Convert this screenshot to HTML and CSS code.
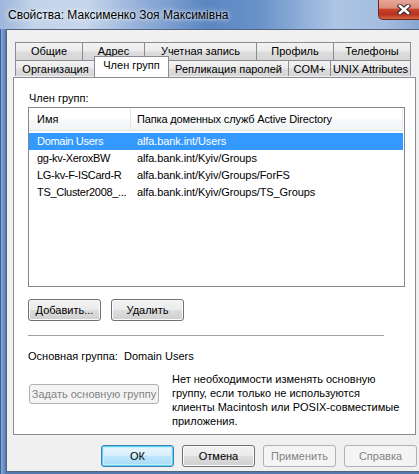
FILE: index.html
```html
<!DOCTYPE html>
<html>
<head>
<meta charset="utf-8">
<title>Свойства</title>
<link rel="stylesheet" href="styles.css">
</head>
<body>
<div class="window">
  <div class="titlebar">
    <span class="title">Свойства: Максименко Зоя Максимівна</span>
    <div class="close">
      <svg width="14" height="11" viewBox="0 0 14 11">
        <path d="M3 2 L11 9 M11 2 L3 9" stroke="#3b2a2a" stroke-width="4.6" stroke-linecap="square" fill="none"/>
        <path d="M3 2 L11 9 M11 2 L3 9" stroke="#ffffff" stroke-width="2.6" stroke-linecap="square" fill="none"/>
      </svg>
    </div>
  </div>
  <div class="frame">
    <div class="client">
      <div class="tabs">
        <div class="tabrow back">
          <div class="tab t-gen">Общие</div>
          <div class="tab t-addr">Адрес</div>
          <div class="tab t-acc">Учетная запись</div>
          <div class="tab t-prof">Профиль</div>
          <div class="tab t-tel last">Телефоны</div>
        </div>
        <div class="tabrow front">
          <div class="tab t-org">Организация</div>
          <div class="tab t-mem selected">Член групп</div>
          <div class="tab t-rep">Репликация паролей</div>
          <div class="tab t-com">COM+</div>
          <div class="tab t-unix last">UNIX Attributes</div>
        </div>
      </div>
      <div class="panel">
        <div class="label">Член групп:</div>
        <div class="listbox">
          <div class="lhead">
            <div class="hc1">Имя</div>
            <div class="hc2">Папка доменных служб Active Directory</div>
          </div>
          <div class="rows">
            <div class="row sel"><span class="c1">Domain Users</span><span class="c2">alfa.bank.int/Users</span></div>
            <div class="row"><span class="c1">gg-kv-XeroxBW</span><span class="c2">alfa.bank.int/Kyiv/Groups</span></div>
            <div class="row"><span class="c1">LG-kv-F-ISCard-R</span><span class="c2">alfa.bank.int/Kyiv/Groups/ForFS</span></div>
            <div class="row"><span class="c1">TS_Cluster2008_...</span><span class="c2">alfa.bank.int/Kyiv/Groups/TS_Groups</span></div>
          </div>
        </div>
        <div class="btnrow">
          <button class="btn">Добавить...</button>
          <button class="btn">Удалить</button>
        </div>
        <div class="sep"></div>
        <div class="primary"><span class="pg-label">Основная группа:</span><span>Domain Users</span></div>
        <div class="setrow">
          <button class="btn setbtn" disabled>Задать основную группу</button>
          <p class="note">Нет необходимости изменять основную<br>группу, если только не используются<br>клиенты Macintosh или POSIX-совместимые<br>приложения.</p>
        </div>
      </div>
      <div class="footer">
        <button class="btn default">ОК</button>
        <button class="btn">Отмена</button>
        <button class="btn" disabled>Применить</button>
        <button class="btn" disabled>Справка</button>
      </div>
    </div>
  </div>
</div>
</body>
</html>
```
FILE: styles.css
```css
html, body {
  margin: 0;
  padding: 0;
}
body {
  width: 419px;
  height: 474px;
  overflow: hidden;
  background: #5a7fb6;
  font-family: "Liberation Sans", Arial, sans-serif;
  font-size: 11px;
  color: #000;
}
.window {
  width: 430px;
  height: 480px;
  display: flex;
  flex-direction: column;
  background: #5a7fb6;
}
.titlebar {
  height: 29px;
  display: flex;
  align-items: flex-start;
  background: linear-gradient(90deg, #9db6da 0%, #c3d3ea 8%, #c6d6eb 20%, #8eabd6 34%, #5b86c2 48%, #6891c9 60%, #aec5e4 78%, #a3bcdf 90%, #7f9fd0 100%);
}
.title {
  flex: 1;
  padding-left: 8px;
  line-height: 30px;
  font-size: 12px;
  color: #000;
  text-shadow: 0 0 6px rgba(255,255,255,0.9), 0 0 3px rgba(255,255,255,0.7);
  white-space: nowrap;
}
.close {
  width: 49px;
  height: 20px;
  margin-right: 3px;
  box-sizing: border-box;
  border: 1px solid #6e2b22;
  border-top: none;
  border-radius: 0 0 5px 5px;
  background: linear-gradient(#e8a797 0%, #d98c7c 42%, #c7432e 50%, #b8321d 75%, #d4653f 100%);
  display: flex;
  align-items: center;
  justify-content: center;
  padding-left: 3px;
}
.frame {
  flex: 1;
  padding-left: 6px;
  background: linear-gradient(90deg, #3c5f98 0px, #3c5f98 1px, #89a9d7 1px, #7196cc 3px, #5378b0 6px);
}
.client {
  width: 417px;
  height: 443px;
  box-sizing: border-box;
  border: 1px solid #52647e;
  background: #f0f0f0;
  padding: 12px 0 0 6px;
  display: flex;
  flex-direction: column;
}
.tabs {
  margin-left: 2px;
  width: 396px;
}
.tabrow {
  display: flex;
}
.tab {
  box-sizing: border-box;
  border-left: 1px solid #898c95;
  border-top: 1px solid #898c95;
  background: linear-gradient(#f3f3f3 0%, #ebebeb 45%, #dcdcdc 55%, #d6d6d6 100%);
  text-align: center;
  white-space: nowrap;
}
.tab.last {
  border-right: 1px solid #898c95;
}
.back .tab {
  height: 18px;
  line-height: 17px;
}
.front .tab {
  height: 16px;
  line-height: 16px;
}
.t-gen { width: 67px; }
.t-addr { width: 62px; }
.t-acc { width: 112px; }
.t-prof { width: 77px; }
.t-tel { width: 78px; }
.t-org { width: 80px; }
.t-mem { width: 73px; }
.t-rep { width: 120px; }
.t-com { width: 42px; }
.t-unix { width: 81px; }
.front .tab.selected {
  position: relative;
  z-index: 2;
  width: 75px;
  height: 21px;
  margin: -4px -1px 0 -1px;
  border-right: 1px solid #898c95;
  background: #fff;
  line-height: 17px;
}
.panel {
  position: relative;
  z-index: 1;
  box-sizing: border-box;
  width: 403px;
  height: 358px;
  border: 1px solid #898c95;
  background: #fff;
  padding: 14px 0 0 14px;
}
.label {
  line-height: 13px;
  height: 13px;
  margin-left: 1px;
}
.listbox {
  margin-top: 2px;
  box-sizing: border-box;
  width: 377px;
  height: 180px;
  border: 1px solid #828790;
  background: #fff;
}
.lhead {
  display: flex;
  height: 23px;
  box-sizing: border-box;
  border-bottom: 1px solid #e3e5e8;
  background: linear-gradient(#ffffff 0%, #ffffff 45%, #f7f8f9 55%, #f3f4f6 100%);
  margin-right: 1px;
}
.hc1 {
  width: 102px;
  box-sizing: border-box;
  padding-left: 8px;
  border-right: 1px solid #e3e5e8;
  line-height: 22px;
}
.hc2 {
  flex: 1;
  padding-left: 6px;
  line-height: 22px;
  border-right: 1px solid #e3e5e8;
  white-space: nowrap;
  letter-spacing: -0.15px;
}
.rows {
  padding-top: 2px;
}
.row {
  display: flex;
  height: 17px;
  line-height: 17px;
  margin-right: 1px;
  white-space: nowrap;
}
.row.sel {
  background: #3399ff;
  color: #fff;
}
.c1 {
  width: 102px;
  box-sizing: border-box;
  padding-left: 8px;
  overflow: hidden;
  letter-spacing: -0.3px;
}
.c2 {
  padding-left: 6px;
  letter-spacing: -0.1px;
}
.btnrow {
  display: flex;
  gap: 10px;
  margin-top: 12px;
}
.btn {
  box-sizing: border-box;
  width: 73px;
  height: 22px;
  padding: 0;
  border: 1px solid #707070;
  border-radius: 3px;
  background: linear-gradient(#f2f2f2 0%, #ebebeb 48%, #dddddd 52%, #cfcfcf 100%);
  box-shadow: inset 0 0 0 1px #fbfbfb;
  font-family: "Liberation Sans", Arial, sans-serif;
  font-size: 11px;
  font-weight: 400;
  color: #000;
  white-space: nowrap;
}
.btn:disabled {
  border-color: #adb2b5;
  background: #f4f4f4;
  box-shadow: none;
  color: #838383;
}
.btn.default {
  border-color: #3c7fb1;
  background: linear-gradient(#eaf6fd 0%, #d9f0fc 48%, #bee6fd 52%, #a7d9f5 100%);
  box-shadow: inset 0 0 0 1px #5fd3f8, inset 0 0 0 2px #c4eefd;
}
.sep {
  margin-top: 14px;
  width: 356px;
  height: 1px;
  background: #a0a0a0;
}
.primary {
  margin-top: 14px;
  line-height: 13px;
  display: flex;
  white-space: nowrap;
}
.pg-label {
  width: 96px;
}
.setrow {
  margin-top: 9px;
  display: flex;
  align-items: flex-start;
}
.setbtn {
  width: 130px;
  height: 20px;
  margin-top: 12px;
  margin-left: 1px;
}
.note {
  margin: 0 0 0 13px;
  line-height: 14px;
  white-space: nowrap;
}
.footer {
  display: flex;
  justify-content: flex-end;
  gap: 8px;
  margin-top: 10px;
  padding-right: 5px;
}
```
